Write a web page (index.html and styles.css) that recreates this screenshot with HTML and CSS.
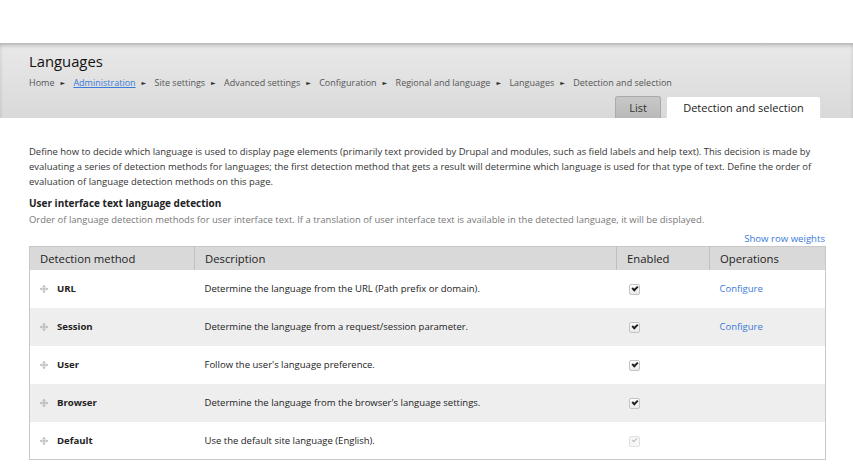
FILE: index.html
```html
<!DOCTYPE html>
<html>
<head>
<meta charset="utf-8">
<link rel="stylesheet" href="styles.css">
</head>
<body>
<div class="topspace"></div>
<header class="head">
  <h1 class="title">Languages</h1>
  <nav class="crumbs">
    <span>Home</span><i class="sep">&#9658;</i>
    <a href="#">Administration</a><i class="sep">&#9658;</i>
    <span>Site settings</span><i class="sep">&#9658;</i>
    <span>Advanced settings</span><i class="sep">&#9658;</i>
    <span>Configuration</span><i class="sep">&#9658;</i>
    <span>Regional and language</span><i class="sep">&#9658;</i>
    <span>Languages</span><i class="sep">&#9658;</i>
    <span>Detection and selection</span>
  </nav>
  <div class="tabs">
    <div class="tab">List</div>
    <div class="tab active">Detection and selection</div>
  </div>
</header>
<main class="content">
  <p class="intro">Define how to decide which language is used to display page elements (primarily text provided by Drupal and modules, such as field labels and help text). This decision is made by evaluating a series of detection methods for languages; the first detection method that gets a result will determine which language is used for that type of text. Define the order of evaluation of language detection methods on this page.</p>
  <h2 class="sub">User interface text language detection</h2>
  <p class="subdesc">Order of language detection methods for user interface text. If a translation of user interface text is available in the detected language, it will be displayed.</p>
  <div class="weights"><a href="#">Show row weights</a></div>
  <table class="tbl">
    <thead>
      <tr><th class="c1">Detection method</th><th class="c2">Description</th><th class="c3">Enabled</th><th class="c4">Operations</th></tr>
    </thead>
    <tbody>
      <tr><td><svg class="handle" viewBox="0 0 9 9"><path d="M4.5 0.5v8M0.5 4.5h8"/><path class="tip" d="M3 2l1.5-1.5L6 2M3 7l1.5 1.5L6 7M2 3L0.5 4.5 2 6M7 3l1.5 1.5L7 6"/></svg><b>URL</b></td><td>Determine the language from the URL (Path prefix or domain).</td><td><span class="cb"></span></td><td><a href="#">Configure</a></td></tr>
      <tr class="even"><td><svg class="handle" viewBox="0 0 9 9"><path d="M4.5 0.5v8M0.5 4.5h8"/><path class="tip" d="M3 2l1.5-1.5L6 2M3 7l1.5 1.5L6 7M2 3L0.5 4.5 2 6M7 3l1.5 1.5L7 6"/></svg><b>Session</b></td><td>Determine the language from a request/session parameter.</td><td><span class="cb"></span></td><td><a href="#">Configure</a></td></tr>
      <tr><td><svg class="handle" viewBox="0 0 9 9"><path d="M4.5 0.5v8M0.5 4.5h8"/><path class="tip" d="M3 2l1.5-1.5L6 2M3 7l1.5 1.5L6 7M2 3L0.5 4.5 2 6M7 3l1.5 1.5L7 6"/></svg><b>User</b></td><td>Follow the user's language preference.</td><td><span class="cb"></span></td><td></td></tr>
      <tr class="even"><td><svg class="handle" viewBox="0 0 9 9"><path d="M4.5 0.5v8M0.5 4.5h8"/><path class="tip" d="M3 2l1.5-1.5L6 2M3 7l1.5 1.5L6 7M2 3L0.5 4.5 2 6M7 3l1.5 1.5L7 6"/></svg><b>Browser</b></td><td>Determine the language from the browser's language settings.</td><td><span class="cb"></span></td><td></td></tr>
      <tr><td><svg class="handle" viewBox="0 0 9 9"><path d="M4.5 0.5v8M0.5 4.5h8"/><path class="tip" d="M3 2l1.5-1.5L6 2M3 7l1.5 1.5L6 7M2 3L0.5 4.5 2 6M7 3l1.5 1.5L7 6"/></svg><b>Default</b></td><td>Use the default site language (English).</td><td><span class="cb dis"></span></td><td></td></tr>
    </tbody>
  </table>
</main>
</body>
</html>
```
FILE: styles.css
```css
html, body { margin: 0; padding: 0; background: #fff; }
body { font-family: "Open Sans", "DejaVu Sans", sans-serif; color: #222; }
.topspace { height: 43px; }
.head {
  height: 75px;
  background: linear-gradient(#e9e9e9, #d9d9d9);
  box-shadow: inset 0 3px 4px -1px rgba(0,0,0,0.25);
  padding: 0 32px 0 29px;
  display: flex;
  flex-direction: column;
  box-sizing: border-box;
}
.title { font-size: 14.8px; font-weight: 400; margin: 8px 0 0 0; line-height: 20px; color: #111; }
.crumbs { font-size: 9px; color: #555; margin-top: 5px; line-height: 13px; white-space: nowrap; }
.crumbs a { color: #3a7ad8; }
.sep { font-style: normal; font-size: 6px; color: #333; margin: 0 6px 0 6px; position: relative; top: -1px; }
.tabs { display: flex; justify-content: flex-end; gap: 5px; margin-top: auto; }
.tab {
  font-size: 11px; line-height: 22px; height: 22px; padding: 0 13px; white-space: nowrap;
  background: linear-gradient(#c8c8c8, #b9b9b9); color: #333;
  border: 1px solid #aaa; border-bottom: 0; border-radius: 3px 3px 0 0;
  box-sizing: border-box;
}
.tab.active { background: #fff; border-color: #ddd; color: #222; padding: 0; width: 155px; text-align: center; }
.content { padding: 26px 28px 0 29px; }
.intro { font-size: 9.45px; line-height: 15px; margin: 0; color: #333; }
.sub { font-size: 10px; font-weight: 700; margin: 7px 0 0 0; line-height: 15px; color: #222; }
.subdesc { font-size: 9.45px; line-height: 14px; margin: 2px 0 0 0; color: #777; }
.weights { text-align: right; font-size: 9.6px; line-height: 14px; margin-top: 5px; }
.weights a, .tbl a { color: #3a7ad8; text-decoration: none; }
.tbl { width: 797px; border-collapse: collapse; border: 1px solid #c8c8c8; margin-top: 0; }
.tbl th {
  background: #d9d9d9; font-weight: 400; font-size: 11.3px; text-align: left; color: #222;
  height: 23px; padding: 0 10px; border-left: 1px solid #c0c0c0; box-sizing: border-box;
}
.tbl th.c1 { border-left: 0; width: 165px; }
.tbl th.c2 { width: 422px; }
.tbl th.c3 { width: 93px; }
.tbl td { font-size: 9.5px; height: 38px; padding: 0 10px; color: #222; box-sizing: border-box; }
.tbl tr.even td { background: #eeeeee; }
.tbl b { font-weight: 700; font-size: 9.6px; margin-left: 9px; }
.tbl td:nth-child(3) { padding-left: 12px; }
.handle { width: 8px; height: 8px; vertical-align: -1px; fill: none; stroke: #a8a8a8; stroke-width: 1; }
.cb {
  display: inline-block; width: 9px; height: 9px; border: 1px solid #c4c4c4; border-radius: 2px;
  background: linear-gradient(#fff, #e9e9e9); position: relative; vertical-align: middle;
}
.cb::after {
  content: ""; position: absolute; left: 2px; top: 1.5px; width: 4px; height: 2px;
  border-left: 2px solid #222; border-bottom: 2px solid #222; transform: rotate(-45deg);
}
.cb.dis { border-color: #e0e0e0; background: #f7f7f7; }
.cb.dis::after { border-color: #bbb; border-width: 0 0 1.5px 1.5px; }
```
